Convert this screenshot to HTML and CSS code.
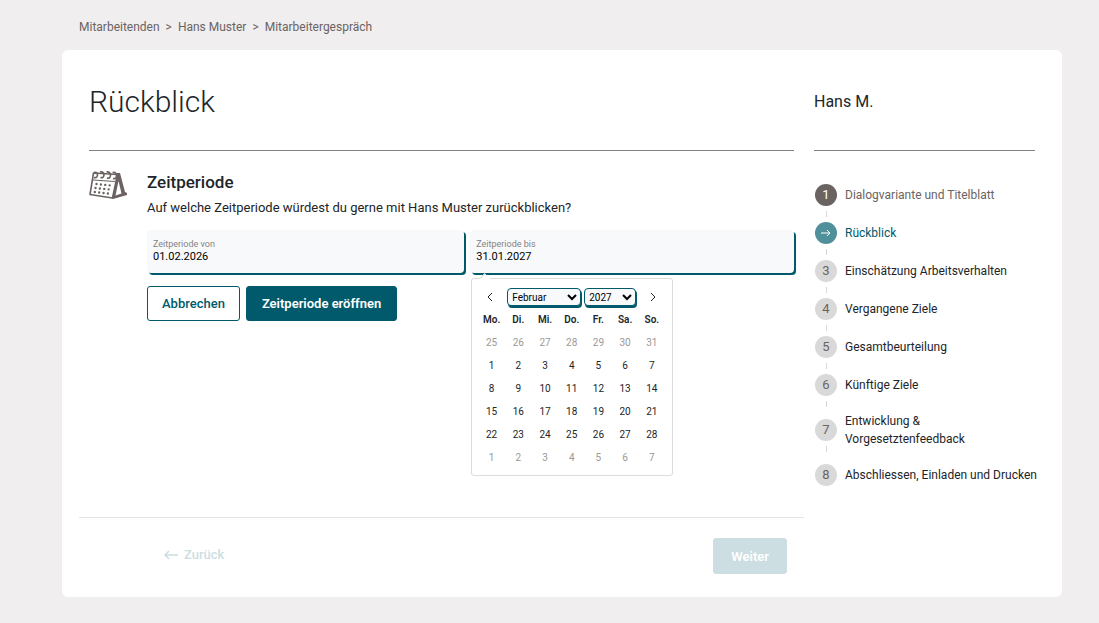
FILE: index.html
```
<!DOCTYPE html>
<html lang="de">
<head>
    <meta charset="UTF-8">
    <meta name="viewport" content="width=device-width, initial-scale=1.0">
    <title>Mitarbeitergespräch - Rückblick</title>
    <link rel="stylesheet" href="styles.css">
</head>
<body>

    <nav class="breadcrumb">
        <a href="#">Mitarbeitenden</a>
        <span>&gt;</span>
        <a href="#">Hans Muster</a>
        <span>&gt;</span>
        <a href="#">Mitarbeitergespräch</a>
    </nav>

    <div class="card">
        <main class="content">
            <header class="head">
                <h1>Rückblick</h1>
            </header>

            <!-- Zeitperiode -->
            <section class="period">
                <svg class="period-icon" viewBox="0 0 38 30" width="38" height="30" fill="none" stroke="#6b6361">
                    <path d="M28 3 L31 3 L36 22 L38 23 L38 25 L24 29 L23 28 Z" fill="#6b6361" stroke="none"/>
                    <path d="M29.500 11 L32.500 23.500 L26.500 25.500 Z" fill="#fff" stroke="none"/>
                    <path d="M4.500 3 L28.500 4.500 L23.500 28 L1 24.500 Z" stroke-width="1.600" stroke-linejoin="round" fill="#fff"/>
                    <path d="M4 10 L26 11.500" stroke-width="1.200"/>
                    <g stroke-width="1.700">
                        <path d="M5 7.500 Q8 8.500 8.500 5 Q8.500 1.500 5 2.500"/>
                        <path d="M11.500 7.500 Q14.500 8.500 15 5 Q15 1.500 11 2"/>
                        <path d="M18 8 Q21 9 21.500 5.500 Q21.500 1.500 17.500 2"/>
                        <path d="M24 8.500 Q27 9.500 27.500 6 Q28 2 23.500 2.500"/>
                    </g>
                    <g stroke-width="2.400" stroke-linecap="round" stroke-dasharray="0 4.400">
                        <path d="M7.500 14 L22 15.500"/>
                        <path d="M6.500 18 L21 19.500"/>
                        <path d="M5.800 22 L20 23.700"/>
                    </g>
                </svg>

                <div class="period-body">
                    <h2>Zeitperiode</h2>
                    <p>Auf welche Zeitperiode würdest du gerne mit Hans Muster zurückblicken?</p>

                    <div class="fields">
                        <div class="field">
                            <label for="from">Zeitperiode von</label>
                            <input type="text" id="from" value="01.02.2026">
                        </div>
                        <div class="field">
                            <label for="to">Zeitperiode bis</label>
                            <input type="text" id="to" value="31.01.2027">

                            <!-- Kalender -->
                            <div class="datepicker">
                                <div class="datepicker-nav">
                                    <button class="arrow" type="button" aria-label="Vorheriger Monat">
                                        <svg viewBox="0 0 8 10" width="8" height="10"><path d="M6 1 L2 5 L6 9"/></svg>
                                    </button>
                                    <div class="selects">
                                        <select class="month" aria-label="Monat">
                                            <option>Januar</option>
                                            <option selected>Februar</option>
                                            <option>März</option>
                                        </select>
                                        <select class="year" aria-label="Jahr">
                                            <option>2026</option>
                                            <option selected>2027</option>
                                            <option>2028</option>
                                        </select>
                                    </div>
                                    <button class="arrow" type="button" aria-label="Nächster Monat">
                                        <svg viewBox="0 0 8 10" width="8" height="10"><path d="M2 1 L6 5 L2 9"/></svg>
                                    </button>
                                </div>
                                <table>
                                    <thead>
                                        <tr><th>Mo.</th><th>Di.</th><th>Mi.</th><th>Do.</th><th>Fr.</th><th>Sa.</th><th>So.</th></tr>
                                    </thead>
                                    <tbody>
                                        <tr class="other"><td>25</td><td>26</td><td>27</td><td>28</td><td>29</td><td>30</td><td>31</td></tr>
                                        <tr><td>1</td><td>2</td><td>3</td><td>4</td><td>5</td><td>6</td><td>7</td></tr>
                                        <tr><td>8</td><td>9</td><td>10</td><td>11</td><td>12</td><td>13</td><td>14</td></tr>
                                        <tr><td>15</td><td>16</td><td>17</td><td>18</td><td>19</td><td>20</td><td>21</td></tr>
                                        <tr><td>22</td><td>23</td><td>24</td><td>25</td><td>26</td><td>27</td><td>28</td></tr>
                                        <tr class="other"><td>1</td><td>2</td><td>3</td><td>4</td><td>5</td><td>6</td><td>7</td></tr>
                                    </tbody>
                                </table>
                            </div>
                        </div>
                    </div>

                    <div class="actions">
                        <button class="button outline" type="button">Abbrechen</button>
                        <button class="button" type="button">Zeitperiode eröffnen</button>
                    </div>
                </div>
            </section>

            <footer class="foot">
                <button class="back" type="button" disabled>
                    <svg viewBox="0 0 14 10" width="14" height="10"><path d="M14 5 H1 M5 1 L1 5 L5 9"/></svg>
                    Zurück
                </button>
                <button class="button" type="button" disabled>Weiter</button>
            </footer>
        </main>

        <aside class="sidebar">
            <header class="head">
                <div class="person">Hans M.</div>
            </header>

            <!-- Schritte -->
            <ol class="steps">
                <li class="done"><div class="marker"><span>1</span></div><a href="#">Dialogvariante und Titelblatt</a></li>
                <li class="current">
                    <div class="marker"><span><svg viewBox="0 0 10 8" width="10" height="8"><path d="M0 4 H9 M6 1 L9 4 L6 7"/></svg></span></div>
                    <a href="#">Rückblick</a>
                </li>
                <li><div class="marker"><span>3</span></div><a href="#">Einschätzung Arbeitsverhalten</a></li>
                <li><div class="marker"><span>4</span></div><a href="#">Vergangene Ziele</a></li>
                <li><div class="marker"><span>5</span></div><a href="#">Gesamtbeurteilung</a></li>
                <li><div class="marker"><span>6</span></div><a href="#">Künftige Ziele</a></li>
                <li><div class="marker"><span>7</span></div><a href="#">Entwicklung &amp; Vorgesetztenfeedback</a></li>
                <li><div class="marker"><span>8</span></div><a href="#">Abschliessen, Einladen und Drucken</a></li>
            </ol>
        </aside>
    </div>

</body>
</html>
```

FILE: styles.css
```
* {
    box-sizing: border-box;
}
body {
    margin: 0;
    padding: 18px 37px 26px 62px;
    background-color: #f0eeef;
    color: #212529;
    font-family: Roboto, sans-serif;
    font-size: 13px;
}
h1, h2, p {
    margin: 0;
}
a {
    color: inherit;
    text-decoration: none;
}
button, input, select {
    font-family: inherit;
}
.breadcrumb {
    display: flex;
    gap: 6px;
    padding-left: 17px;
    margin-bottom: 14px;
    font-size: 12px;
    line-height: 18px;
    color: #6b6361;
}
.card {
    display: grid;
    grid-template-columns: 1fr 221px;
    column-gap: 20px;
    padding: 27px 27px 23px;
    background-color: #fff;
    border-radius: 6px;
}
.head {
    height: 74px;
    border-bottom: 1px solid #868283;
}
h1 {
    font-size: 30px;
    font-weight: 300;
    line-height: 50px;
}
.person {
    font-size: 16px;
    line-height: 50px;
}

/* Zeitperiode */
.period {
    display: flex;
    gap: 20px;
    padding-top: 19px;
}
.period-icon {
    flex: none;
}
.period-body {
    flex: 1;
}
h2 {
    font-size: 17px;
    font-weight: 500;
    line-height: 24px;
}
.period p {
    padding-top: 5px;
    line-height: 18px;
}
.fields {
    display: grid;
    grid-template-columns: 49fr 50fr;
    gap: 6px;
    margin-top: 13px;
}
.field {
    position: relative;
    display: flex;
    flex-direction: column;
    height: 43px;
    padding: 8px 6px;
    background-color: #f8f9fb;
    border-radius: 4px;
    box-shadow: 2px 2px 0 #005a6b;
}
.field label {
    font-size: 9px;
    line-height: 12px;
    color: #868283;
}
.field input {
    width: 100%;
    padding: 0;
    border: none;
    background: none;
    color: #000;
    font-size: 11px;
    line-height: 13px;
}
.actions {
    display: flex;
    gap: 6px;
    margin-top: 13px;
}
.button {
    height: 35px;
    padding: 0 15px;
    background-color: #005a6b;
    color: #fff;
    border: 1px solid #005a6b;
    border-radius: 3px;
    font-size: 13px;
    font-weight: 600;
    cursor: pointer;
}
.button.outline {
    padding: 0 14px;
    background-color: #fff;
    color: #005a6b;
    font-weight: 500;
}
.button:disabled {
    height: 36px;
    padding: 0 17px;
    background-color: #ccdee1;
    border-color: #ccdee1;
}

/* Kalender */
.datepicker {
    position: absolute;
    top: 48px;
    left: 1px;
    width: 202px;
    padding: 8px 7px 6px 6px;
    background-color: #fff;
    border: 1px solid #dcdcdc;
    border-radius: 3px;
    font-size: 10px;
}
.datepicker::before {
    content: "";
    position: absolute;
    top: -4px;
    left: 9px;
    width: 7px;
    height: 7px;
    background-color: #fff;
    border-left: 1px solid #dcdcdc;
    transform: rotate(45deg);
}
.datepicker-nav {
    display: flex;
    align-items: center;
    justify-content: space-between;
    height: 20px;
    margin-bottom: 1px;
}
.arrow {
    display: flex;
    justify-content: center;
    width: 24px;
    padding: 0;
    border: none;
    background: none;
}
.arrow svg {
    fill: none;
    stroke: #212529;
    stroke-width: 1;
}
.selects {
    display: flex;
    gap: 3px;
}
.selects select {
    height: 18px;
    padding: 0;
    background-color: #f8f9fb;
    color: #000;
    border: 1px solid #005a6b;
    border-radius: 4px;
    box-shadow: 1px 2px 0 #005a6b;
    font-size: 10px;
}
.month {
    width: 74px;
}
.year {
    width: 52px;
}
.datepicker table {
    width: 100%;
    border-collapse: collapse;
    table-layout: fixed;
}
.datepicker th, .datepicker td {
    height: 23px;
    padding: 0;
    text-align: center;
}
.datepicker th {
    font-weight: 600;
}
.other {
    color: #999;
}

/* Fusszeile */
.foot {
    display: flex;
    justify-content: space-between;
    margin: 196px -10px 0;
    padding: 20px 17px 0 85px;
    border-top: 1px solid #e3e4e5;
}
.back {
    display: flex;
    align-items: center;
    gap: 6px;
    height: 33px;
    padding: 0;
    border: none;
    background: none;
    color: #ccdee1;
    font-size: 13px;
    font-weight: 500;
}
.back svg {
    fill: none;
    stroke: #ccdee1;
    stroke-width: 1.5;
}

/* Schritte */
.steps {
    margin: 0 -6px 0 0;
    padding: 33px 0 0 1px;
    list-style: none;
    font-size: 12px;
    line-height: 18px;
}
.steps li {
    display: flex;
    align-items: center;
    gap: 8px;
}
.steps a {
    padding-bottom: 16px;
}
.marker span {
    display: flex;
    align-items: center;
    justify-content: center;
    width: 22px;
    height: 22px;
    border-radius: 50%;
    background-color: #d9d9d9;
    color: #6b6361;
    font-size: 13px;
    font-weight: 400;
}
.marker::after {
    content: "";
    display: block;
    width: 1px;
    height: 6px;
    margin: 5px auto;
    background-color: #d9d9d9;
}
.steps li:last-child a {
    padding-bottom: 0;
}
.steps li:last-child .marker::after {
    display: none;
}
.done {
    color: #6b6361;
}
.done .marker span {
    background-color: #6b6361;
    color: #fff;
}
.current {
    color: #005a6b;
}
.current .marker span {
    background-color: #4f909b;
}
.current svg {
    fill: none;
    stroke: #fff;
    stroke-width: 1;
}
```
